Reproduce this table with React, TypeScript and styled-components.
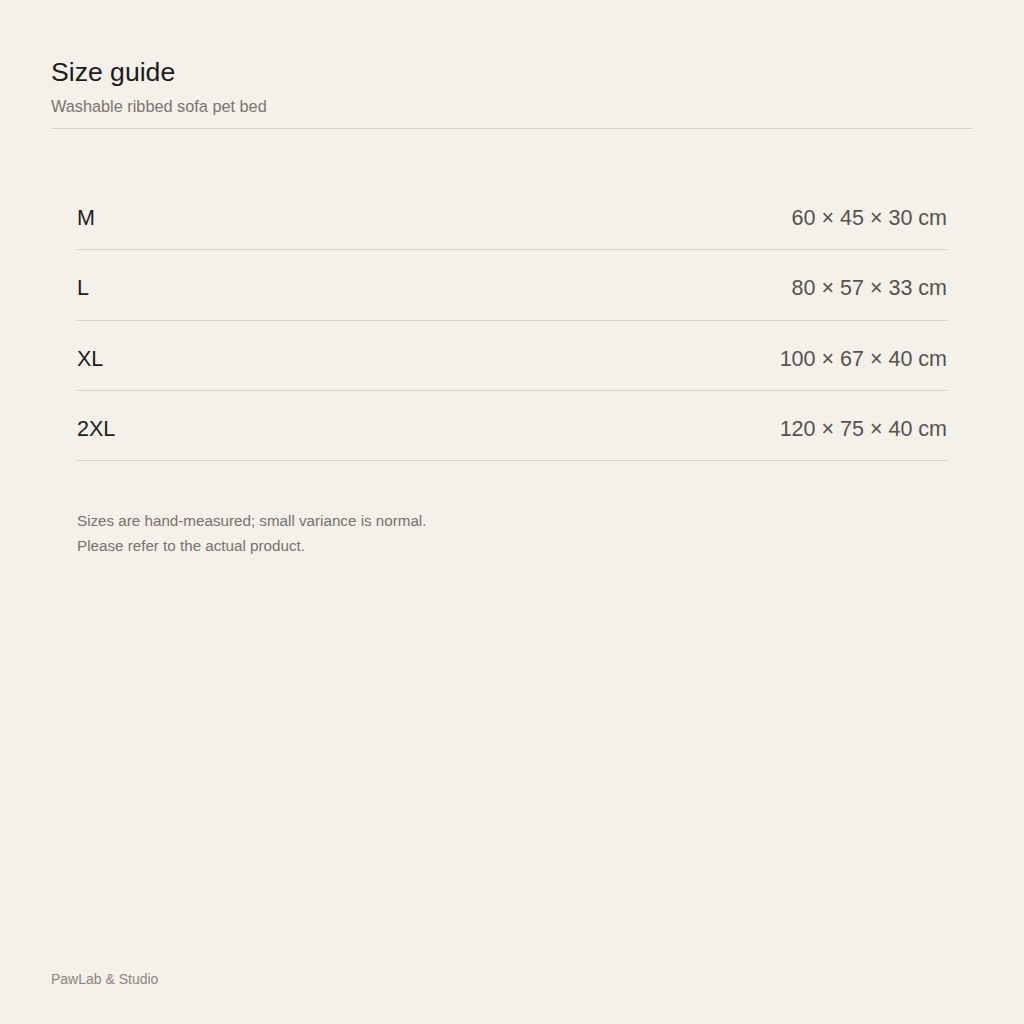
import React from "react";
import styled, { createGlobalStyle } from "styled-components";

const Global = createGlobalStyle`
  html, body { margin: 0; padding: 0; background: #f4f0ea; }
  body { font-family: "Liberation Sans", Arial, sans-serif; }
  * { box-sizing: border-box; }
`;

const Page = styled.div`
  min-height: 100vh;
  display: flex;
  flex-direction: column;
  padding: 56px 51px 36px;
  background: #f4f0ea;
`;

const Header = styled.header`
  display: flex;
  flex-direction: column;
  gap: 8px;
  padding-bottom: 12px;
  border-bottom: 1px solid #d6d1ca;
`;

const Title = styled.h1`
  margin: 0;
  font-size: 26.6px;
  line-height: 32px;
  font-weight: 400;
  color: #1c1c1c;
`;

const Subtitle = styled.p`
  margin: 0;
  font-size: 16.3px;
  line-height: 20px;
  color: #7a7570;
`;

const Table = styled.div`
  display: flex;
  flex-direction: column;
  margin: 51px 26px 0;
`;

const Row = styled.div`
  display: flex;
  justify-content: space-between;
  align-items: center;
  padding: 26px 0 18px;
  border-bottom: 1px solid #d6d1ca;
  font-size: 21.5px;
  line-height: 25.33px;
`;

const Label = styled.span`
  color: #1c1c1c;
`;

const Value = styled.span`
  color: #555250;
`;

const Note = styled.div`
  margin: 47px 26px 0;
  font-size: 15.2px;
  line-height: 25px;
  color: #77726d;
`;

const Footer = styled.footer`
  margin-top: auto;
  font-size: 14px;
  line-height: 18px;
  color: #8a8580;
`;

const sizes = [
  ["M", "60 × 45 × 30 cm"],
  ["L", "80 × 57 × 33 cm"],
  ["XL", "100 × 67 × 40 cm"],
  ["2XL", "120 × 75 × 40 cm"],
];

export default function App() {
  return (
    <>
      <Global />
      <Page>
        <Header>
          <Title>Size guide</Title>
          <Subtitle>Washable ribbed sofa pet bed</Subtitle>
        </Header>
        <Table>
          {sizes.map(([s, v]) => (
            <Row key={s}>
              <Label>{s}</Label>
              <Value>{v}</Value>
            </Row>
          ))}
        </Table>
        <Note>
          Sizes are hand-measured; small variance is normal.
          <br />
          Please refer to the actual product.
        </Note>
        <Footer>PawLab &amp; Studio</Footer>
      </Page>
    </>
  );
}
